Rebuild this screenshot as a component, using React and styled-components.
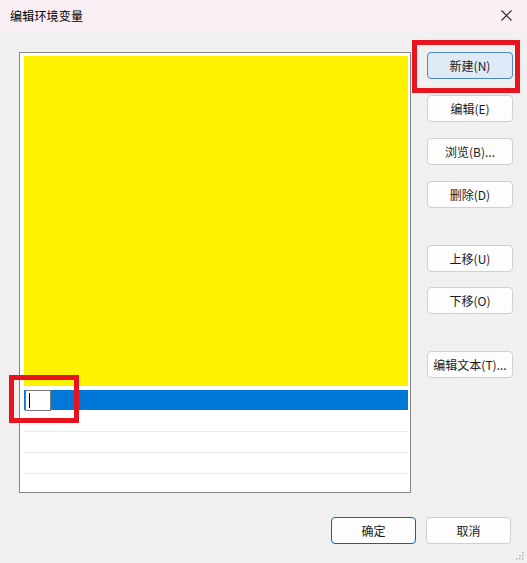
import React from "react";
import styled, { createGlobalStyle } from "styled-components";

const GlobalStyle = createGlobalStyle`
  html, body {
    margin: 0;
    padding: 0;
    background: #f0f0f0;
  }
  * {
    box-sizing: border-box;
  }
`;

const Window = styled.div`
  position: relative;
  width: 527px;
  height: 563px;
  background: #f0f0f0;
  font-family: "Noto Sans CJK SC", "Noto Sans", sans-serif;
  font-size: 12px;
  color: #1a1a1a;
  overflow: hidden;
`;

const TitleBar = styled.div`
  height: 31px;
  display: flex;
  align-items: center;
  justify-content: space-between;
  padding: 0 15px 0 10px;
  background: #f8eef4;
`;

const Title = styled.span`
  font-size: 12px;
  color: #000;
  letter-spacing: 0.2px;
`;

const Body = styled.div`
  padding: 21px 14px 0 19px;
`;

const MainRow = styled.div`
  display: flex;
  gap: 16px;
`;

const ListBox = styled.div`
  width: 392px;
  height: 441px;
  border: 1px solid #858585;
  background: #fff;
  padding: 3px 2px 0 4px;
  overflow: hidden;
`;

const YellowBlock = styled.div`
  height: 330px;
  background: #fff200;
  margin-bottom: 4px;
`;

const SelectedRow = styled.div`
  height: 21px;
  display: flex;
  align-items: flex-start;
  background: linear-gradient(#0078d7 0 20px, transparent 20px);
`;

const EditBox = styled.div`
  width: 26px;
  height: 21px;
  margin-left: 1px;
  background: #fff;
  border: 1px solid #7a7a7a;
  display: flex;
  align-items: center;
  padding-left: 3px;
`;

const Caret = styled.span`
  width: 1px;
  height: 15px;
  background: #000;
`;

const EmptyRow = styled.div`
  height: 21px;
  border-bottom: 1px solid #ececec;
`;

const ButtonColumn = styled.div`
  display: flex;
  flex-direction: column;
  width: 86px;
`;

const Button = styled.button`
  width: ${(p) => p.$width || 86}px;
  height: 27px;
  margin-top: ${(p) => p.$gap || 0}px;
  font-family: inherit;
  font-size: 12px;
  color: #1a1a1a;
  background: ${(p) => (p.$primary ? "#dfeaf7" : "#fdfdfd")};
  border: 1px solid ${(p) => (p.$primary ? "#4a86c8" : p.$focus ? "#0067c0" : "#d0d0d0")};
  border-radius: 4px;
  padding: 0;
  display: flex;
  align-items: center;
  justify-content: center;
  cursor: default;
`;

const Footer = styled.div`
  display: flex;
  justify-content: flex-end;
  gap: 10px;
  margin-top: 24px;
  padding-right: 2px;
`;

const Highlight = styled.div`
  position: absolute;
  left: ${(p) => p.$x}px;
  top: ${(p) => p.$y}px;
  width: ${(p) => p.$w}px;
  height: ${(p) => p.$h}px;
  border: 5px solid #e5141f;
  pointer-events: none;
`;

const Grip = styled.svg`
  position: absolute;
  right: 3px;
  bottom: 3px;
`;

function CloseIcon() {
  return (
    <svg width="11" height="11" viewBox="0 0 11 11">
      <path d="M0.5 0.5L10.5 10.5M10.5 0.5L0.5 10.5" stroke="#222" strokeWidth="1.1" />
    </svg>
  );
}

export default function App() {
  return (
    <Window>
      <GlobalStyle />
      <TitleBar>
        <Title>编辑环境变量</Title>
        <CloseIcon />
      </TitleBar>
      <Body>
        <MainRow>
          <ListBox>
            <YellowBlock />
            <SelectedRow>
              <EditBox>
                <Caret />
              </EditBox>
            </SelectedRow>
            <EmptyRow />
            <EmptyRow />
            <EmptyRow />
            <EmptyRow />
          </ListBox>
          <ButtonColumn>
            <Button $primary>新建(N)</Button>
            <Button $gap={16}>编辑(E)</Button>
            <Button $gap={16}>浏览(B)...</Button>
            <Button $gap={16}>删除(D)</Button>
            <Button $gap={37}>上移(U)</Button>
            <Button $gap={15}>下移(O)</Button>
            <Button $gap={37}>编辑文本(T)...</Button>
          </ButtonColumn>
        </MainRow>
        <Footer>
          <Button $width={85} $focus>确定</Button>
          <Button $width={85}>取消</Button>
        </Footer>
      </Body>
      <Highlight $x={412} $y={40} $w={108} $h={53} />
      <Highlight $x={9} $y={375} $w={70} $h={48} />
      <Grip width="8" height="8" viewBox="0 0 8 8">
        <rect x="6" y="0" width="1.5" height="1.5" fill="#b5b5b5" />
        <rect x="3" y="3" width="1.5" height="1.5" fill="#b5b5b5" />
        <rect x="6" y="3" width="1.5" height="1.5" fill="#b5b5b5" />
        <rect x="0" y="6" width="1.5" height="1.5" fill="#b5b5b5" />
        <rect x="3" y="6" width="1.5" height="1.5" fill="#b5b5b5" />
        <rect x="6" y="6" width="1.5" height="1.5" fill="#b5b5b5" />
      </Grip>
    </Window>
  );
}
